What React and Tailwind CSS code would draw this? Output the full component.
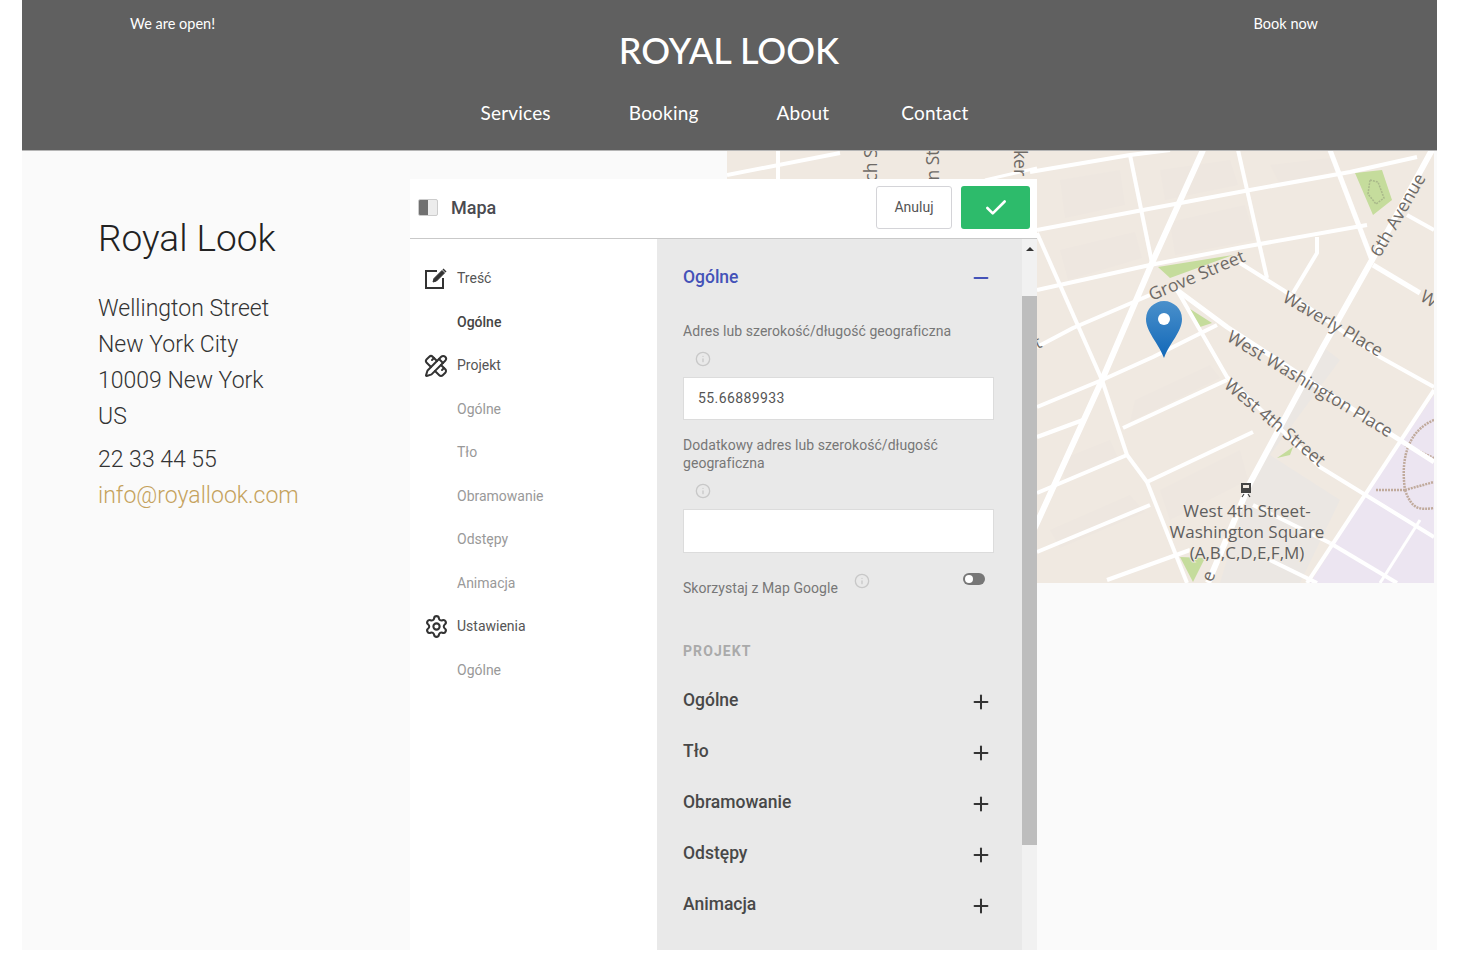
import React from 'react';
import { Check, Info, Minus, PencilRuler, Plus, Settings } from 'lucide-react';

const sidebar = [
  { label: 'Treść', icon: 'edit' },
  { label: 'Ogólne', active: true },
  { label: 'Projekt', icon: 'ruler' },
  { label: 'Ogólne' },
  { label: 'Tło' },
  { label: 'Obramowanie' },
  { label: 'Odstępy' },
  { label: 'Animacja' },
  { label: 'Ustawienia', icon: 'gear' },
  { label: 'Ogólne' },
];

const sections = ['Ogólne', 'Tło', 'Obramowanie', 'Odstępy', 'Animacja'];

const roads = [
  // wide avenues
  { w: 6, d: 'M1203 150 L1152 263 L1102 380 L1037 523 L1000 600' },
  { w: 6, d: 'M1432 150 L1372 260 L1323 347 L1250 483 L1208 583' },
  { w: 5, d: 'M1330 150 L1372 260' },
  // cross streets
  { w: 4, d: 'M1030 172 L1130 155 L1170 150' },
  { w: 4, d: 'M1037 230 L1143 210 L1250 190 L1350 172 L1417 157' },
  { w: 4, d: 'M1037 290 L1150 265 L1243 247 L1367 225' },
  { w: 4, d: 'M1037 347 L1073 328 L1150 295' },
  { w: 4, d: 'M1037 407 L1102 380 L1153 357 L1217 325' },
  { w: 4, d: 'M1037 437 L1083 420' },
  { w: 4, d: 'M1123 428 L1227 380' },
  { w: 4, d: 'M1037 493 L1127 455' },
  { w: 4, d: 'M1147 482 L1253 432' },
  { w: 4, d: 'M1037 552 L1150 505' },
  { w: 4, d: 'M1107 580 L1190 550' },
  // long streets
  { w: 4, d: 'M1130 155 L1152 263' },
  { w: 4, d: 'M1037 233 L1102 380 L1127 455 L1147 482 L1187 583' },
  { w: 4, d: 'M1238 150 L1267 278' },
  { w: 4, d: 'M1317 237 L1317 253 L1293 293' },
  { w: 4, d: 'M1240 263 L1283 290 L1380 357 L1434 387' },
  { w: 5, d: 'M1177 290 L1227 327 L1392 435 L1434 462' },
  { w: 4, d: 'M1177 290 L1227 377 L1320 467 L1434 537' },
  { w: 5, d: 'M1373 265 L1420 293' },
  { w: 4, d: 'M1407 215 L1434 230' },
  { w: 4, d: 'M1434 390 L1307 583' },
  { w: 3, d: 'M1420 520 L1380 583' },
  { w: 4, d: 'M1270 560 L1317 583' },
  { w: 4, d: 'M1330 543 L1397 583' },
  { w: 4, d: 'M1253 505 L1330 543' },
  // strip above the panel
  { w: 4, d: 'M727 175 L840 153' },
  { w: 4, d: 'M778 151 L778 180' },
  { w: 3, d: 'M985 180 L1037 168' },
];

const labels = [
  { t: 'Grove Street', x: 1199, y: 281, r: -23 },
  { t: 'Waverly Place', x: 1330, y: 329, r: 30 },
  { t: 'West Washington Place', x: 1307, y: 389, r: 31 },
  { t: 'West 4th Street', x: 1271, y: 427, r: 40 },
  { t: '6th Avenue', x: 1403, y: 218, r: -60 },
  { t: 'W', x: 1426, y: 304, r: 30 },
  { t: 't', x: 1040, y: 348, r: -25 },
  { t: 'ch S', x: 877, y: 165, r: -90 },
  { t: 'n St', x: 939, y: 165, r: -90 },
  { t: 'ker', x: 1014, y: 163, r: 90 },
  { t: 'e', x: 1214, y: 578, r: -70 },
];

function MapView() {
  return (
    <svg viewBox="727 151 707 432" className="block w-full h-full" style={{ fontFamily: '"Open Sans", sans-serif' }}>
      <defs>
        <linearGradient id="pin" x1="0" y1="0" x2="0" y2="1">
          <stop offset="0" stopColor="#4a90cb" />
          <stop offset="1" stopColor="#1268b8" />
        </linearGradient>
      </defs>
      <rect x="727" y="151" width="707" height="432" fill="#f0e9e1" />
      {/* faint building blocks */}
      <path d="M1060 180 L1120 170 L1125 205 L1065 218 Z M1160 170 L1230 160 L1238 185 L1165 200 Z M1270 165 L1330 158 L1340 170 L1280 185 Z M1060 250 L1135 232 L1142 258 L1068 280 Z M1170 222 L1245 205 L1255 240 L1175 255 Z M1135 400 L1210 365 L1220 378 L1130 422 Z M1060 460 L1110 440 L1118 458 L1065 480 Z M1160 490 L1240 450 L1248 480 L1170 520 Z M1050 530 L1130 495 L1145 512 L1060 548 Z" fill="#eee7e0" />
      <path d="M1323 347 L1250 483 L1220 583 L1300 583 L1340 500 L1270 455 L1340 360 Z" fill="#ebe7e3" />
      <path d="M1434 395 L1434 583 L1310 583 L1375 480 Z" fill="#ece5f1" />
      {/* parks */}
      <path d="M1158 267 L1233 255 L1170 278 Z M1187 307 L1212 323 L1200 327 Z M1355 173 L1382 170 L1392 200 L1373 215 Z M1277 458 L1293 447 L1290 455 Z M1180 557 L1205 558 L1193 582 Z" fill="#c5dc9c" />
      <path d="M1370 180 L1378 182 L1384 198 L1376 204 L1368 194 Z" fill="none" stroke="#a9b88a" strokeWidth="1.5" strokeDasharray="2 1" />
      {/* square footpaths */}
      <path d="M1434 420 C1410 430 1400 455 1405 490 M1405 490 L1375 490 M1405 490 L1434 482 M1405 490 C1412 510 1420 510 1434 508 M1405 445 L1434 458" fill="none" stroke="#c0aa9c" strokeWidth="2.5" strokeDasharray="2 1" />
      {roads.map((r, i) => (
        <path key={i} d={r.d} fill="none" stroke="#fff" strokeWidth={r.w} strokeLinejoin="round" />
      ))}
      {labels.map((l, i) => (
        <text key={i} x={l.x} y={l.y} textAnchor="middle" fontSize="17.5" fill="#6e6a66" transform={`rotate(${l.r} ${l.x} ${l.y})`}>
          {l.t}
        </text>
      ))}
      {/* subway stop */}
      <path d="M1241 483 H1251 V493 H1241 Z" fill="#444" />
      <rect x="1243" y="485" width="6" height="3" fill="#f0e9e1" />
      <path d="M1242 497 L1244 494 M1250 497 L1248 494" stroke="#444" strokeWidth="1.2" />
      <g fontSize="17" fill="#5e5e5e" textAnchor="middle" stroke="#f0e9e1" strokeWidth="2" paintOrder="stroke">
        <text x="1247" y="517">West 4th Street-</text>
        <text x="1247" y="538">Washington Square</text>
        <text x="1247" y="559">(A,B,C,D,E,F,M)</text>
      </g>
      {/* marker */}
      <path d="M1164 358 C1158 342 1146 332 1146 319 A18 18 0 0 1 1182 319 C1182 332 1170 342 1164 358 Z" fill="url(#pin)" />
      <circle cx="1164" cy="319" r="6" fill="#fff" />
    </svg>
  );
}

function EditIcon() {
  return (
    <svg width="24" height="22" viewBox="0 0 24 22" fill="none" stroke="#333" strokeWidth="2">
      <path d="M13 3 H2 V20 H19 V10" />
      <path d="M9 14 L10 10.5 L18 2.5 L20.5 5 L12.5 13 Z" fill="#333" strokeWidth="1" />
      <path d="M19 1 L22 4" strokeWidth="1.5" />
    </svg>
  );
}

function SidebarItem({ item }) {
  return (
    <div className="flex items-center h-[43.5px]">
      <div className="w-[46px] flex justify-center pl-[4px]">
        {item.icon === 'edit' && <EditIcon />}
        {item.icon === 'ruler' && <PencilRuler size={24} strokeWidth={2} className="text-[#333]" />}
        {item.icon === 'gear' && <Settings size={25} strokeWidth={2} className="text-[#333]" />}
      </div>
      <span
        className={
          item.icon
            ? 'text-[14px] text-[#555]'
            : item.active
              ? 'text-[14px] font-medium text-[#444]'
              : 'text-[14px] text-[#999]'
        }
      >
        {item.label}
      </span>
    </div>
  );
}

function Panel() {
  return (
    <div
      className="absolute left-[388px] top-[28px] w-[627px] h-[771px] bg-white flex flex-col"
      style={{ fontFamily: 'Roboto, sans-serif' }}
    >
      <div className="h-[60px] shrink-0 flex items-center border-b border-[#c9c9c9] pl-[8px] pr-[7px] pb-[2px]">
        <div className="w-[20px] h-[17px] rounded-[2px] border border-[#ccc] bg-[#ececec] overflow-hidden">
          <div className="w-[9px] h-full bg-[#707070]" />
        </div>
        <span className="ml-[13px] -mt-[1px] text-[18px] font-medium text-[#4a4a50]">Mapa</span>
        <div className="ml-auto flex items-center gap-[9px]">
          <button className="w-[76px] h-[43px] rounded-[3px] border border-[#d4d4d8] bg-white text-[14px] text-[#555]">
            Anuluj
          </button>
          <button className="w-[69px] h-[43px] rounded-[3px] bg-[#2dbb6b] flex items-center justify-center">
            <Check size={26} strokeWidth={2.4} className="text-white" />
          </button>
        </div>
      </div>

      <div className="flex flex-1 min-h-0">
        <div className="w-[247px] shrink-0 pt-[18px] pl-[1px]">
          {sidebar.map((item, i) => (
            <SidebarItem key={i} item={item} />
          ))}
        </div>

        <div className="flex-1 bg-[#e9e9e9] pl-[26px] pr-[28px]">
          <div className="h-[76px] flex items-center justify-between">
            <span className="text-[17.5px] font-medium text-[#4452b8]">Ogólne</span>
            <Minus size={22} strokeWidth={2.2} className="text-[#4452b8] mr-[2px] mt-[2px]" />
          </div>
          <div className="text-[14px] leading-[18px] tracking-[0.05px] text-[#777] mt-[7px]">Adres lub szerokość/długość geograficzna</div>
          <div className="h-[37px] flex items-center pl-[12px]">
            <Info size={16} strokeWidth={2} className="text-[#c8c8c8]" />
          </div>
          <div className="h-[43px] bg-white border border-[#dcdcdc] flex items-center pl-[14px] text-[14px] tracking-[0.4px] text-[#555]">
            55.66889933
          </div>
          <div className="text-[14px] leading-[18px] tracking-[0.05px] text-[#777] mt-[16px]">
            Dodatkowy adres lub szerokość/długość
            <br />
            geograficzna
          </div>
          <div className="h-[37px] flex items-center pl-[12px]">
            <Info size={16} strokeWidth={2} className="text-[#c8c8c8]" />
          </div>
          <div className="h-[44px] bg-white border border-[#dcdcdc]" />

          <div className="relative h-[40px] flex items-center">
            <span className="text-[14px] tracking-[0.05px] text-[#777] mt-[30px]">Skorzystaj z Map Google</span>
            <Info size={16} strokeWidth={2} className="text-[#c8c8c8] ml-[16px] mt-[16px]" />
            <div className="ml-auto mr-[9px] mt-[11px] w-[22px] h-[12px] rounded-full bg-[#777] flex items-center pl-[2px]">
              <div className="w-[8px] h-[8px] rounded-full bg-white" />
            </div>
          </div>

          <div className="mt-[48px] text-[14px] font-bold tracking-[1.1px] text-[#aaa]">PROJEKT</div>

          <div className="mt-[13px]">
            {sections.map((s) => (
              <div key={s} className="h-[51px] flex items-center justify-between">
                <span className="text-[17.5px] font-medium text-[#484848]">{s}</span>
                <Plus size={22} strokeWidth={2.2} className="text-[#333] mr-[2px] mt-[2px]" />
              </div>
            ))}
          </div>
        </div>

        <div className="w-[15px] shrink-0 bg-[#f1f1f1]">
          <div className="h-[57px] flex justify-center pt-[8px]">
            <div className="w-0 h-0 border-x-[4px] border-x-transparent border-b-[4px] border-b-[#333]" />
          </div>
          <div className="h-[549px] bg-[#bdbdbd]" />
        </div>
      </div>
    </div>
  );
}

export default function App() {
  return (
    <div className="min-h-[962px] bg-white pl-[22px]">
      <div className="w-[1415px]">
        <header
          className="h-[151px] bg-[#606060] border-b border-[#b5b5b5] text-white"
          style={{ fontFamily: 'Lato, sans-serif' }}
        >
          <div className="flex justify-between pl-[108px] pr-[119px] pt-[14px] text-[14.5px] leading-[20px]">
            <span>We are open!</span>
            <span>Book now</span>
          </div>
          <div className="flex justify-center mt-[-6px] pr-[1px] text-[36px] leading-[44px] font-medium">ROYAL LOOK</div>
          <nav className="flex justify-center gap-[78px] mt-[27px] pr-[10px] text-[19px] leading-[28px] tracking-[0.2px]">
            <span>Services</span>
            <span>Booking</span>
            <span>About</span>
            <span className="-ml-[6px]">Contact</span>
          </nav>
        </header>

        <div className="relative h-[799px] bg-[#fafafa] flex">
          <div className="w-[705px] shrink-0 pl-[76px] pt-[63px] text-[#333]" style={{ fontFamily: 'Roboto, sans-serif' }}>
            <h1 className="text-[37px] leading-[50px] font-light text-[#222]">Royal Look</h1>
            <div className="mt-[27px] text-[23px] leading-[36px] font-light">
              <p>Wellington Street</p>
              <p>New York City</p>
              <p>10009 New York</p>
              <p>US</p>
            </div>
            <p className="mt-[7px] text-[23px] leading-[36px] font-light">22 33 44 55</p>
            <p className="text-[23px] leading-[36px] font-light text-[#c5a25d]">info@royallook.com</p>
          </div>
          <div className="w-[707px] h-[432px]">
            <MapView />
          </div>
          <Panel />
        </div>
      </div>
    </div>
  );
}
